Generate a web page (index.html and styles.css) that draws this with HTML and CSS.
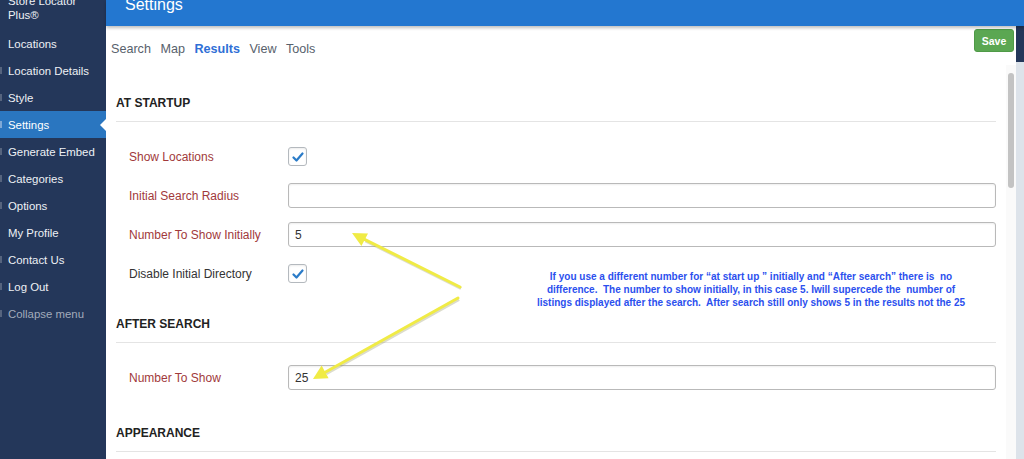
FILE: index.html
```html
<!DOCTYPE html>
<html>
  <head>
    <title>Store Locator Plus - Settings</title>
    <link rel="stylesheet" href="styles.css">
  </head>
  <body>
    <div class="page">
      <div class="sidebar">
        <div class="brand">
          <div class="brand-text">Store Locator<br>Plus®</div>
        </div>
        <div class="menu-item">Locations</div>
        <div class="menu-item"><span class="menu-icon"></span>Location Details</div>
        <div class="menu-item"><span class="menu-icon"></span>Style</div>
        <div class="menu-item active"><span class="menu-icon"></span>Settings</div>
        <div class="menu-item"><span class="menu-icon"></span>Generate Embed</div>
        <div class="menu-item"><span class="menu-icon"></span>Categories</div>
        <div class="menu-item"><span class="menu-icon"></span>Options</div>
        <div class="menu-item">My Profile</div>
        <div class="menu-item"><span class="menu-icon"></span>Contact Us</div>
        <div class="menu-item"><span class="menu-icon"></span>Log Out</div>
        <div class="menu-item collapse"><span class="menu-icon"></span>Collapse menu</div>
      </div>

      <div class="main">
        <div class="header">
          <h1>Settings</h1>
        </div>

        <div class="body-row">
          <div class="panel">
            <div class="toolbar">
              <div class="tabs">
                <span class="tab">Search</span>
                <span class="tab">Map</span>
                <span class="tab current">Results</span>
                <span class="tab">View</span>
                <span class="tab">Tools</span>
              </div>
              <button class="save-btn">Save</button>
            </div>

            <div class="scroll-area">
              <div class="content">
                <div class="section">
                  <h2 class="section-title">AT STARTUP</h2>
                  <div class="rows">
                    <div class="row">
                      <label class="label">Show Locations</label>
                      <span class="checkbox">
                        <svg width="12" height="12" viewBox="0 0 12 12"><path d="M1.5 6.5 L4.5 9.5 L10.5 2.5" fill="none" stroke="#2a7bc8" stroke-width="2.2" stroke-linecap="round" stroke-linejoin="round"/></svg>
                      </span>
                    </div>
                    <div class="row">
                      <label class="label">Initial Search Radius</label>
                      <input class="text-input" type="text" value="">
                    </div>
                    <div class="row">
                      <label class="label">Number To Show Initially</label>
                      <input class="text-input" type="text" value="5">
                    </div>
                    <div class="row">
                      <label class="label plain">Disable Initial Directory</label>
                      <span class="checkbox">
                        <svg width="12" height="12" viewBox="0 0 12 12"><path d="M1.5 6.5 L4.5 9.5 L10.5 2.5" fill="none" stroke="#2a7bc8" stroke-width="2.2" stroke-linecap="round" stroke-linejoin="round"/></svg>
                      </span>
                    </div>
                  </div>
                </div>

                <div class="section">
                  <h2 class="section-title">AFTER SEARCH</h2>
                  <div class="rows">
                    <div class="row">
                      <label class="label">Number To Show</label>
                      <input class="text-input" type="text" value="25">
                    </div>
                  </div>
                </div>

                <div class="section">
                  <h2 class="section-title">APPEARANCE</h2>
                </div>
              </div>
              <div class="scrollbar"><div class="thumb"></div></div>
            </div>
          </div>
          <div class="edge">
            <div class="edge-top"></div>
          </div>
        </div>
      </div>

      <!-- annotation drawn over the screenshot -->
      <div class="note">
        If you use a different number for “at start up ” initially and “After search” there is&nbsp; no<br>
        difference.&nbsp; The number to show initially, in this case 5. Iwill supercede the&nbsp; number of<br>
        listings displayed after the search.&nbsp; After search still only shows 5 in the results not the 25
      </div>
      <svg class="arrows" width="1024" height="459" viewBox="0 0 1024 459">
        <g fill="none" stroke="#9a9a6a" stroke-opacity="0.35" stroke-width="3" transform="translate(1,1.5)">
          <line x1="460" y1="287" x2="364.5" y2="239.3"/>
          <line x1="458" y1="298" x2="325.2" y2="372.2"/>
        </g>
        <g stroke="#f0eb45" stroke-width="3" stroke-linecap="round">
          <line x1="460" y1="287" x2="364.5" y2="239.3"/>
          <line x1="458" y1="298" x2="325.2" y2="372.2"/>
        </g>
        <g fill="#f0eb45">
          <polygon points="352,233 368,233.4 361.4,246"/>
          <polygon points="313,379 328.6,378.2 321.6,365.6"/>
        </g>
      </svg>
    </div>
  </body>
</html>
```

FILE: styles.css
```css
body {
  margin: 0;
  font-family: "Liberation Sans", Arial, sans-serif;
  background: #dde3ea;
  overflow: hidden;
}

.page {
  position: relative;
  display: flex;
  width: 1024px;
  height: 459px;
  overflow: hidden;
}

/* left admin menu */
.sidebar {
  width: 106px;
  flex-shrink: 0;
  background: #24375a;
  color: #eef1f5;
  font-size: 11.4px;
}

.brand {
  height: 30px;
  overflow: hidden;
}

.brand-text {
  margin-top: -6px;
  padding-left: 8px;
  line-height: 14px;
}

.menu-item {
  position: relative;
  display: flex;
  align-items: center;
  height: 27px;
  padding-left: 8px;
  white-space: nowrap;
}

.menu-icon {
  position: absolute;
  left: 0;
  top: 10px;
  width: 2px;
  height: 7px;
  background: #56647e;
}

.menu-item.active {
  background: #2a76c0;
  color: #fff;
}

.menu-item.active .menu-icon {
  background: #7fa9d6;
}

.menu-item.active::after {
  content: "";
  position: absolute;
  right: 0;
  top: 8px;
  border-top: 6px solid transparent;
  border-bottom: 6px solid transparent;
  border-right: 6px solid #fff;
}

.menu-item.collapse {
  color: #a2abbb;
}

/* main area */
.main {
  flex: 1;
  display: flex;
  flex-direction: column;
  min-width: 0;
}

.header {
  position: relative;
  z-index: 2;
  height: 26px;
  background: #2377d0;
  box-shadow: 0 2px 3px rgba(0, 0, 0, 0.25);
  overflow: hidden;
}

.header h1 {
  margin: -5px 0 0 19px;
  font-size: 16px;
  line-height: 20px;
  font-weight: normal;
  color: #fff;
}

.body-row {
  flex: 1;
  display: flex;
  min-height: 0;
}

.panel {
  flex: 1;
  display: flex;
  flex-direction: column;
  background: #fff;
  min-width: 0;
}

.edge {
  width: 8px;
  flex-shrink: 0;
  background: #dde3ea;
}

.edge-top {
  height: 36px;
  background: #24375a;
}

.toolbar {
  display: flex;
  justify-content: space-between;
  align-items: flex-start;
  height: 39px;
  padding: 3px 2px 0 5px;
  box-sizing: border-box;
}

.tabs {
  display: flex;
  gap: 9.5px;
  margin-top: 13px;
  font-size: 12.6px;
  color: #58616c;
}

.tab.current {
  color: #2f6fd6;
  font-weight: bold;
}

.save-btn {
  width: 40px;
  height: 23px;
  padding: 0;
  background: #5ba752;
  color: #fff;
  border: 1px solid #4f9a47;
  border-radius: 3px;
  font-family: "Liberation Sans", Arial, sans-serif;
  font-size: 10.5px;
  font-weight: bold;
}

.scroll-area {
  flex: 1;
  display: flex;
  min-height: 0;
  overflow: hidden;
}

.content {
  flex: 1;
  padding: 0 10px 0 10px;
}

.scrollbar {
  width: 10px;
  flex-shrink: 0;
  background: #fafafa;
  padding-top: 8px;
  box-sizing: border-box;
}

.thumb {
  width: 6px;
  height: 115px;
  margin-left: 2px;
  background: #c3c3c3;
  border-radius: 3px;
}

.section-title {
  margin: 0;
  padding: 0 0 8px 0;
  font-size: 12px;
  line-height: 20px;
  font-weight: bold;
  color: #222;
  border-bottom: 1px solid #e4e4e4;
}

.section:first-child .section-title {
  margin-top: 28px;
}

.section + .section .section-title {
  margin-top: 21px;
}

.section:last-child .section-title {
  margin-top: 26px;
}

.rows {
  padding-top: 15px;
}

.row {
  display: flex;
  align-items: center;
  height: 39px;
}

.label {
  width: 172px;
  flex-shrink: 0;
  padding-left: 13px;
  box-sizing: border-box;
  font-size: 12px;
  color: #a1393b;
}

.label.plain {
  color: #333;
}

.checkbox {
  display: flex;
  align-items: center;
  justify-content: center;
  width: 17px;
  height: 17px;
  border: 1px solid #b4b9be;
  border-radius: 3px;
  box-shadow: inset 0 1px 2px rgba(0, 0, 0, 0.08);
}

.text-input {
  flex: 1;
  height: 25px;
  margin: 0;
  padding: 0 6px;
  box-sizing: border-box;
  border: 1px solid #b9b9b9;
  border-radius: 3px;
  box-shadow: inset 0 1px 2px rgba(0, 0, 0, 0.07);
  font-family: "Liberation Sans", Arial, sans-serif;
  font-size: 12px;
  color: #333;
}

/* annotation overlay */
.note {
  position: absolute;
  left: 501px;
  top: 270px;
  width: 500px;
  text-align: center;
  font-size: 10px;
  line-height: 13px;
  font-weight: bold;
  color: #2b50ee;
}

.arrows {
  position: absolute;
  left: 0;
  top: 0;
  pointer-events: none;
}
```
